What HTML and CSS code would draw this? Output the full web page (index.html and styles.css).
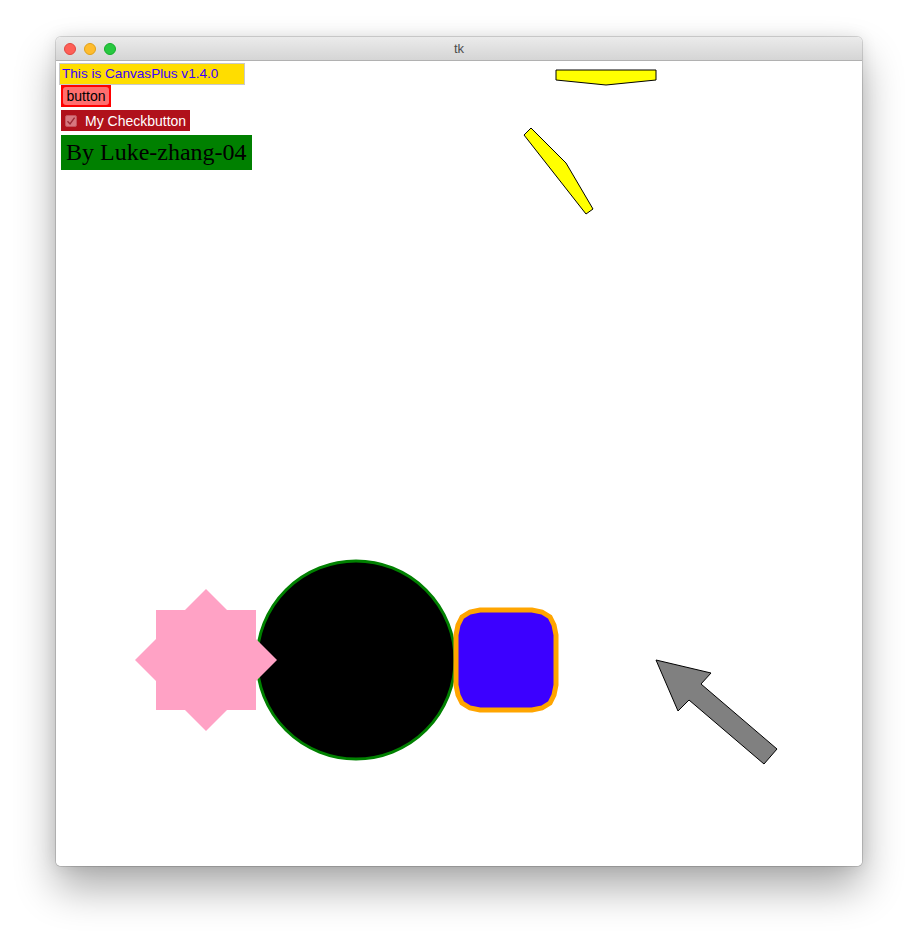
FILE: index.html
```html
<!DOCTYPE html>
<html>
<head>
<meta charset="utf-8">
<title>tk</title>
<link rel="stylesheet" href="styles.css">
</head>
<body>
<div class="window">
  <div class="titlebar">
    <div class="lights">
      <span class="light red"></span>
      <span class="light yellow"></span>
      <span class="light green"></span>
    </div>
    <div class="title">tk</div>
  </div>
  <div class="canvas">
    <svg class="drawing" width="806" height="805" viewBox="0 0 806 805" xmlns="http://www.w3.org/2000/svg">
      <polygon points="500,9 600,9 600,19 550,24 500,19" fill="#ffff00" stroke="#000" stroke-width="1"/>
      <polygon points="468,74 475,67 510,102 537,148 530,153" fill="#ffff00" stroke="#000" stroke-width="1"/>
      <circle cx="300" cy="599" r="99" fill="#000" stroke="#008000" stroke-width="3"/>
      <rect x="100" y="549" width="100" height="100" fill="#ffa2c5"/>
      <polygon points="150,528 221,599 150,670 79,599" fill="#ffa2c5"/>
      <path d="M424 549 L476 549 L486 551 L494 556 L498 564 L500 574 L500 624 L498 634 L494 642 L486 647 L476 649 L424 649 L414 647 L406 642 L402 634 L400 624 L400 574 L402 564 L406 556 L414 551 Z" fill="#3c00ff" stroke="#ffa500" stroke-width="5"/>
      <polygon points="600,599 655,612 645,623 721,688 708,703 633,639 622,650" fill="#808080" stroke="#000" stroke-width="1"/>
    </svg>
    <div class="widgets">
      <div class="label">This is CanvasPlus v1.4.0</div>
      <div class="button"><span class="button-face">button</span></div>
      <div class="check">
        <span class="box">
          <svg width="10" height="10" viewBox="0 0 10 10"><path d="M1.5 5.2 L4 8 L8.6 1.6" fill="none" stroke="#9b2a35" stroke-width="1.4"/></svg>
        </span>
        <span class="check-text">My Checkbutton</span>
      </div>
      <div class="author">By Luke-zhang-04</div>
    </div>
  </div>
</div>
</body>
</html>
```

FILE: styles.css
```css
html, body {
  margin: 0;
  padding: 0;
  background: #ffffff;
}
body {
  width: 918px;
  height: 940px;
  overflow: hidden;
  padding: 37px 0 0 56px;
  box-sizing: border-box;
}
.window {
  width: 806px;
  height: 829px;
  border-radius: 5px;
  overflow: hidden;
  background: #fff;
  box-shadow: 0 0 0 1px rgba(0,0,0,0.14), 0 22px 42px rgba(0,0,0,0.33), 0 0 16px rgba(0,0,0,0.10);
  display: flex;
  flex-direction: column;
}
.titlebar {
  height: 23px;
  flex: none;
  background: linear-gradient(#ebebeb, #d5d5d5);
  border-bottom: 1px solid #b1b1b1;
  display: flex;
  align-items: center;
  position: relative;
}
.lights {
  display: flex;
  gap: 8px;
  padding-left: 8px;
}
.light {
  width: 12px;
  height: 12px;
  border-radius: 50%;
  box-sizing: border-box;
}
.light.red { background: #fe5f57; border: 1px solid #e2463f; }
.light.yellow { background: #febc2e; border: 1px solid #e1a116; }
.light.green { background: #28c840; border: 1px solid #14ae2a; }
.title {
  position: absolute;
  left: 0;
  right: 0;
  top: 0;
  bottom: 0;
  display: flex;
  align-items: center;
  justify-content: center;
  font: 13px "Liberation Sans", Arial, sans-serif;
  color: #4d4d4d;
  pointer-events: none;
}
.canvas {
  position: relative;
  flex: 1;
  background: #fff;
}
.drawing {
  position: absolute;
  left: 0;
  top: 0;
  display: block;
}
.widgets {
  position: absolute;
  left: 3px;
  top: 2px;
  display: flex;
  flex-direction: column;
  align-items: flex-start;
  font-family: "Liberation Sans", Arial, sans-serif;
  font-size: 14px;
}
.label {
  box-sizing: border-box;
  width: 186px;
  height: 22px;
  background: #ffdd00;
  border: 1px solid #c9c9c9;
  color: #3a00ff;
  padding: 0 0 0 2px;
  line-height: 20px;
  font-size: 13.6px;
}
.button {
  margin: 0 0 0 2px;
  box-sizing: border-box;
  width: 50px;
  height: 22px;
  background: #ff0000;
  padding: 2px;
  display: flex;
}
.button-face {
  flex: 1;
  background: #ff6e6e;
  border-radius: 3px;
  color: #000;
  line-height: 18px;
  text-align: center;
}
.check {
  margin: 3px 0 0 2px;
  box-sizing: border-box;
  width: 129px;
  height: 21px;
  background: #b0111b;
  display: flex;
  align-items: center;
  padding-left: 4px;
  gap: 8px;
}
.box {
  width: 12px;
  height: 12px;
  border-radius: 2px;
  background: #d7777f;
  border: 1px solid #c4545d;
  box-sizing: border-box;
  display: flex;
  align-items: center;
  justify-content: center;
}
.box svg { display: block; }
.check-text {
  color: #ffffff;
  font-size: 14px;
}
.author {
  margin: 4px 0 0 2px;
  box-sizing: border-box;
  width: 191px;
  height: 35px;
  background: #008000;
  color: #000;
  font-family: "Liberation Serif", "Times New Roman", serif;
  font-size: 24px;
  line-height: 34px;
  padding-left: 5px;
}
```
